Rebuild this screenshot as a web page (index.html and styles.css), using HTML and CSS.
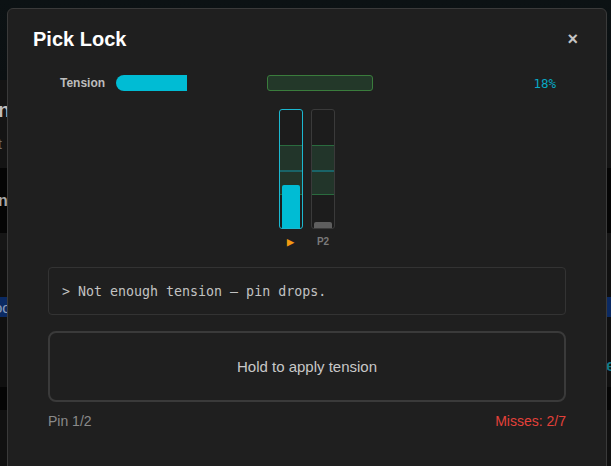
FILE: index.html
```html
<!DOCTYPE html>
<html>
<head>
<meta charset="utf-8">
<link rel="stylesheet" href="styles.css">
</head>
<body>
<div class="page">
  <div class="bg-top"></div>
  <div class="bg-sec bg-a">
    <div class="bg-title">n</div>
    <div class="bg-sub">t</div>
  </div>
  <div class="bg-sec bg-b"><div class="bg-item">ni</div></div>
  <div class="bg-sec bg-c"></div>
  <div class="bg-sec bg-d"></div>
  <div class="bg-sec bg-sel"><div class="bg-item bg-sel-text">oo</div></div>
  <div class="bg-sec bg-e"><div class="bg-link">e</div></div>
  <div class="bg-sec bg-f"></div>
  <div class="bg-sec bg-g"></div>
</div>

<div class="modal">
  <div class="modal-head">
    <h2 class="modal-title">Pick Lock</h2>
    <span class="modal-close">×</span>
  </div>

  <div class="tension-row">
    <span class="tension-label">Tension</span>
    <div class="track">
      <div class="track-fill" style="width: 18%"></div>
      <div class="track-zone"></div>
    </div>
    <span class="tension-pct">18%</span>
  </div>

  <div class="pins">
    <div class="pin-col">
      <div class="pin pin-active">
        <div class="pin-zone"><div class="pin-mid"></div></div>
        <div class="pin-fill" style="height: 43px"></div>
      </div>
      <div class="pin-label pin-label-active">▶</div>
    </div>
    <div class="pin-col">
      <div class="pin">
        <div class="pin-zone"><div class="pin-mid"></div></div>
        <div class="pin-rest"></div>
      </div>
      <div class="pin-label">P2</div>
    </div>
  </div>

  <div class="log">&gt; Not enough tension — pin drops.</div>

  <div class="hold-btn">Hold to apply tension</div>

  <div class="footer">
    <span class="pin-count">Pin 1/2</span>
    <span class="misses">Misses: 2/7</span>
  </div>
</div>
</body>
</html>
```

FILE: styles.css
```css
html, body {
  margin: 0;
  padding: 0;
  height: 100%;
  overflow: hidden;
  background: #0b1113;
  font-family: "Liberation Sans", Arial, sans-serif;
}

.page {
  display: flex;
  flex-direction: column;
}

.bg-top {
  height: 80px;
  background: linear-gradient(180deg, #0c1214 0%, #0b1012 100%);
}

.bg-sec {
  position: relative;
}

.bg-a {
  height: 88px;
  background: #141414;
  padding-top: 18px;
  box-sizing: border-box;
}

.bg-title {
  font-size: 20px;
  font-weight: bold;
  color: #bdbdbd;
  line-height: 24px;
  margin-left: -2px;
}

.bg-sub {
  font-size: 14px;
  color: #6f6f6f;
  margin-top: 14px;
  margin-left: -2px;
}

.bg-b {
  height: 65px;
  background: #050505;
  display: flex;
  align-items: center;
}

.bg-item {
  font-size: 16px;
  font-weight: bold;
  color: #a8a8a8;
  margin-left: -2px;
}

.bg-c {
  height: 17px;
  background: #161616;
}

.bg-d {
  height: 47px;
  background: #101010;
}

.bg-sel {
  height: 20px;
  background: #0b2a63;
  display: flex;
  align-items: center;
}

.bg-sel-text {
  color: #8a9ab8;
  font-weight: normal;
  font-size: 15px;
  margin-left: -6px;
}

.bg-e {
  height: 70px;
  background: #101010;
}

.bg-link {
  position: absolute;
  right: -4px;
  top: 40px;
  font-size: 16px;
  font-weight: bold;
  color: #127a8a;
}

.bg-f {
  height: 23px;
  background: #050505;
}

.bg-g {
  height: 60px;
  background: #111111;
}

/* modal */
.modal {
  position: absolute;
  left: 7px;
  top: 8px;
  width: 600px;
  height: 480px;
  box-sizing: border-box;
  background: #1f1f1f;
  border: 1px solid #3a3a3a;
  border-radius: 6px;
  padding: 19px 24px;
  display: flex;
  flex-direction: column;
}

.modal-head {
  display: flex;
  justify-content: space-between;
  align-items: center;
  height: 23px;
}

.modal-title {
  margin: 0 0 0 1px;
  font-size: 20px;
  line-height: 23px;
  font-weight: bold;
  color: #ffffff;
}

.modal-close {
  font-size: 18px;
  font-weight: bold;
  color: #c4c4c4;
  margin-right: 4px;
  line-height: 23px;
}

.tension-row {
  display: flex;
  align-items: center;
  margin-top: 24px;
  height: 16px;
  padding: 0 26px 0 28px;
}

.tension-label {
  width: 56px;
  flex-shrink: 0;
  font-size: 12px;
  font-weight: bold;
  color: #bdbdbd;
}

.track {
  position: relative;
  width: 394px;
  height: 16px;
  flex-shrink: 0;
  border-radius: 8px;
  overflow: hidden;
}

.track-fill {
  position: absolute;
  left: 0;
  top: 0;
  bottom: 0;
  background: #00bcd4;
}

.track-zone {
  position: absolute;
  left: 151px;
  top: 0;
  width: 106px;
  height: 16px;
  box-sizing: border-box;
  background: #233829;
  border: 1px solid #3a7c3c;
  border-radius: 3px;
}

.tension-pct {
  flex: 1;
  text-align: right;
  font-family: "DejaVu Sans Mono", "Liberation Mono", monospace;
  font-size: 12.5px;
  color: #08a8c4;
}

.pins {
  display: flex;
  justify-content: center;
  gap: 8px;
  margin-top: 18px;
}

.pin-col {
  display: flex;
  flex-direction: column;
  align-items: center;
  width: 24px;
}

.pin {
  position: relative;
  width: 24px;
  height: 120px;
  box-sizing: border-box;
  border: 1px solid #3a3a3a;
  border-radius: 3px;
  background: #1c1c1c;
}

.pin-active {
  border-color: #1cb8d0;
}

.pin-zone {
  position: absolute;
  left: 0;
  right: 0;
  top: 35px;
  height: 50px;
  box-sizing: border-box;
  background: #22352a;
  border-top: 1px solid #2a6b3e;
  border-bottom: 1px solid #2a6b3e;
}

.pin-mid {
  position: absolute;
  left: 0;
  right: 0;
  top: 24px;
  height: 2px;
  background: #1a6468;
}

.pin-fill {
  position: absolute;
  left: 2px;
  right: 2px;
  bottom: 0;
  background: #00bcd4;
  border-radius: 2px 2px 0 0;
}

.pin-rest {
  position: absolute;
  left: 2px;
  right: 2px;
  bottom: 0;
  height: 6px;
  background: #5e5e5e;
  border-radius: 2px 2px 0 0;
}

.pin-label {
  margin-top: 7px;
  font-size: 10px;
  line-height: 12px;
  font-weight: bold;
  color: #7a7a7a;
}

.pin-label-active {
  color: #f39a12;
  font-size: 9px;
  margin-right: 2px;
}

.log {
  margin: 19px 16px 0;
  height: 48px;
  box-sizing: border-box;
  border: 1px solid #333333;
  border-radius: 4px;
  padding: 0 13px;
  display: flex;
  align-items: center;
  font-family: "DejaVu Sans Mono", "Liberation Mono", monospace;
  font-size: 13.3px;
  color: #c2c2c2;
}

.hold-btn {
  margin: 16px 16px 0;
  height: 71px;
  box-sizing: border-box;
  border: 2px solid #3a3a3a;
  border-radius: 8px;
  display: flex;
  align-items: center;
  justify-content: center;
  font-size: 15px;
  color: #c8c8c8;
}

.footer {
  margin: 11px 16px 0;
  display: flex;
  justify-content: space-between;
  font-size: 14px;
  line-height: 16px;
}

.pin-count {
  color: #8a8a8a;
}

.misses {
  color: #e3413a;
}
```
